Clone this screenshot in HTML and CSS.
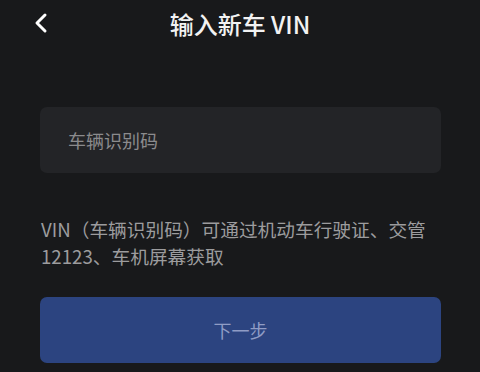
FILE: index.html
```html
<!DOCTYPE html>
<html lang="zh-CN">
<head>
    <meta charset="UTF-8">
    <title>输入新车 VIN</title>
    <link rel="stylesheet" href="styles.css">
</head>
<body>
<div class="page">
    <div class="nav">
        <a class="back" href="#">
            <svg width="14" height="22" viewBox="0 0 14 22">
                <path d="M11 3 L3 11 L11 19" fill="none" stroke="#ffffff" stroke-width="3" stroke-linecap="round" stroke-linejoin="round"/>
            </svg>
        </a>
        <h1 class="title">输入新车 VIN</h1>
    </div>
    <form class="form" action="" method="post">
        <input class="input" type="text" placeholder="车辆识别码">
        <p class="tip">VIN（车辆识别码）可通过机动车行驶证、交管12123、车机屏幕获取</p>
        <button class="btn" type="submit">下一步</button>
    </form>
</div>
</body>
</html>
```

FILE: styles.css
```css
html, body {
    margin: 0;
    padding: 0;
    background: #18191b;
}

.page {
    width: 480px;
    height: 372px;
    font-family: "Noto Sans CJK SC", "Noto Sans", sans-serif;
    color: #ffffff;
    overflow: hidden;
}

.nav {
    position: relative;
    height: 48px;
    display: flex;
    align-items: center;
    justify-content: center;
}

.nav .back {
    position: absolute;
    left: 34px;
    top: 12px;
    display: block;
    line-height: 0;
}

.title {
    margin: 0;
    font-size: 24px;
    font-weight: 500;
    line-height: 1;
    color: #f2f2f2;
}

.form {
    padding: 59px 39px 0 40px;
}

.input {
    display: block;
    box-sizing: border-box;
    width: 401px;
    height: 66px;
    padding: 0 28px;
    border: none;
    border-radius: 7px;
    background: #232427;
    font: 18px "Noto Sans CJK SC", "Noto Sans", sans-serif;
    color: #dddddd;
    outline: none;
}

.input::placeholder {
    color: #8b8b8d;
}

.tip {
    margin: 42px 0 0 1px;
    width: 400px;
    font-size: 18.7px;
    line-height: 27px;
    font-weight: 400;
    color: #9c9c9e;
}

.btn {
    display: block;
    width: 401px;
    height: 66px;
    margin-top: 28px;
    border: none;
    border-radius: 7px;
    background: #2c4480;
    color: #8f9cc5;
    font: 18px "Noto Sans CJK SC", "Noto Sans", sans-serif;
    cursor: pointer;
}
```
